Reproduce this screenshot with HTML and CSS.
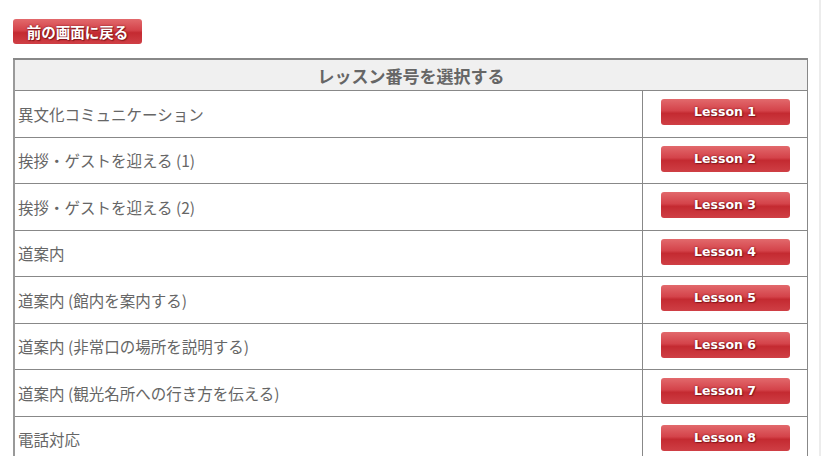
FILE: index.html
```html
<!DOCTYPE html>
<html lang="ja">
<head>
    <meta charset="UTF-8">
    <title>レッスン選択</title>
    <link rel="stylesheet" href="styles.css">
</head>
<body>
    <div class="page">
        <div class="back-row">
            <a class="btn back-btn" href="#">前の画面に戻る</a>
        </div>

        <table class="lessons">
            <tr>
                <th colspan="2">レッスン番号を選択する</th>
            </tr>
            <tr>
                <td class="title">異文化コミュニケーション</td>
                <td class="action"><a class="btn lesson-btn" href="#">Lesson 1</a></td>
            </tr>
            <tr>
                <td class="title">挨拶・ゲストを迎える (1)</td>
                <td class="action"><a class="btn lesson-btn" href="#">Lesson 2</a></td>
            </tr>
            <tr>
                <td class="title">挨拶・ゲストを迎える (2)</td>
                <td class="action"><a class="btn lesson-btn" href="#">Lesson 3</a></td>
            </tr>
            <tr>
                <td class="title">道案内</td>
                <td class="action"><a class="btn lesson-btn" href="#">Lesson 4</a></td>
            </tr>
            <tr>
                <td class="title">道案内 (館内を案内する)</td>
                <td class="action"><a class="btn lesson-btn" href="#">Lesson 5</a></td>
            </tr>
            <tr>
                <td class="title">道案内 (非常口の場所を説明する)</td>
                <td class="action"><a class="btn lesson-btn" href="#">Lesson 6</a></td>
            </tr>
            <tr>
                <td class="title">道案内 (観光名所への行き方を伝える)</td>
                <td class="action"><a class="btn lesson-btn" href="#">Lesson 7</a></td>
            </tr>
            <tr>
                <td class="title">電話対応</td>
                <td class="action"><a class="btn lesson-btn" href="#">Lesson 8</a></td>
            </tr>
        </table>
    </div>
</body>
</html>
```

FILE: styles.css
```css
body { margin: 0; background: #fff; font-family: "Noto Sans CJK JP", "DejaVu Sans", sans-serif; color: #666; overflow: hidden; }
.page { width: 821px; border-right: 2px solid #ececec; min-height: 456px; box-sizing: border-box; padding: 19px 0 0 13px; }
.back-row { height: 39px; }
.btn { display: inline-block; color: #fff; text-decoration: none; font-weight: bold; text-align: center; border-radius: 3px;
       background: linear-gradient(#e2696c 0%, #d4434a 45%, #c42a31 55%, #cf3f45 100%);
       text-shadow: 0 0 2px #7a1216, 1px 1px 1px #8a1a1e; }
.back-btn { width: 129px; height: 25px; line-height: 25px; font-size: 14.5px; }
.lessons { width: 795px; border-collapse: collapse; border-left: 2px solid #999; }
.lessons th { height: 30px; padding: 0; background: #f0f0f0; border: 1px solid #888; border-top-width: 2px; font-size: 17px; color: #666; }
.lessons td { height: 45.5px; padding: 0; border: 1px solid #888; }
.title { padding-left: 3px !important; font-size: 15.5px; }
.action { width: 164px; text-align: center; }
.lesson-btn { width: 129px; height: 26px; line-height: 26px; font-family: "DejaVu Sans", Verdana, sans-serif; font-size: 12.5px; vertical-align: middle; margin-bottom: 3px; }
```
